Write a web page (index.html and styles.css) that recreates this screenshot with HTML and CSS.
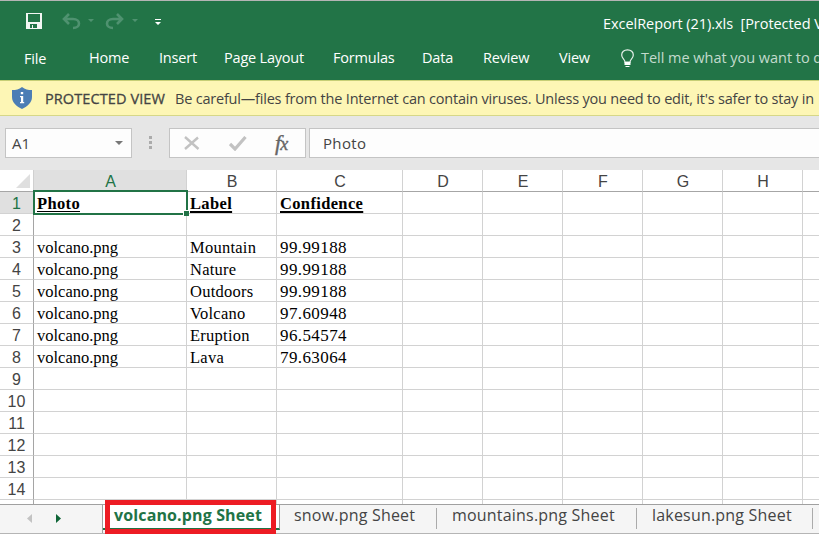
FILE: index.html
```html
<!DOCTYPE html>
<html lang="en">
<head>
<meta charset="utf-8">
<title>ExcelReport (21).xls</title>
<link rel="stylesheet" href="styles.css">
</head>
<body>
<div class="window">
  <header class="ribbon">
    <div class="titlebar">
      <svg class="quick" width="150" height="30" viewBox="0 0 150 30">
        <path fill="#f2f6f3" fill-rule="evenodd" d="M0 0H16V16H0ZM2 1V9H14V1ZM4 11V15H6V12H7V15H11V11Z" transform="translate(26 6)"/>
        <g fill="none" stroke="#4f9270" stroke-width="2.6">
          <path d="M69 7L64 12L69 17M64 12H73C81 12 81 21 73 21"/>
          <path d="M117 7L122 12L117 17M122 12H113C105 12 105 21 113 21"/>
        </g>
        <path fill="#4f9270" d="M88 12h6l-3 3zM132 12h6l-3 3z"/>
      </svg>
      <svg class="customize" width="6" height="7" viewBox="0 0 6 7"><path fill="#fff" d="M0 0H6V1H0ZM0 3H6L3 6Z"/></svg>
      <span class="filename">ExcelReport (21).xls&nbsp; [Protected View]</span>
    </div>
    <nav class="menu">
      <span class="file">File</span>
      <span class="home">Home</span>
      <span class="insert">Insert</span>
      <span class="layout">Page Layout</span>
      <span class="formulas">Formulas</span>
      <span class="data">Data</span>
      <span class="review">Review</span>
      <span class="view">View</span>
      <svg class="bulb" width="13" height="19" viewBox="0 0 13 19"><path fill="none" stroke="#e8f1ec" stroke-width="1.2" d="M4 13.2C4 10 .7 9.500 .7 6C.7 3 3 .8 6.500 .8S12.300 3 12.300 6C12.300 9.500 9 10 9 13.200Z"/><path fill="#fff" d="M3.500 13H9.500V16H3.500ZM4.500 17H8.500V18H4.500Z"/></svg>
      <span class="tell">Tell me what you want to do</span>
    </nav>
  </header>
  <section class="notice">
    <svg width="20" height="22" viewBox="0 0 20 22"><path fill="#4b7db5" d="M10 0C7 2.500 4 3 0 3V10C0 16 5 19.500 10 22C15 19.500 20 16 20 10V3C16 3 13 2.500 10 0Z"/><path fill="#fff" d="M8.800 5H11.200V7.300H8.800ZM8 9H11.200V15H12.200V16.200H8V15H9V10.200H8Z"/></svg>
    <span class="protected">PROTECTED VIEW</span>
    <span class="careful">Be careful—files from the Internet can contain viruses. Unless you need to edit, it's safer to stay in</span>
  </section>
  <section class="formula-row">
    <div class="box name-box"><span>A1</span><svg width="8" height="4" viewBox="0 0 8 4"><path fill="#777" d="M0 0H8L4 4Z"/></svg></div>
    <svg class="dots" width="3" height="13" viewBox="0 0 3 13"><path fill="#ababab" d="M0 0H3V3H0ZM0 5H3V8H0ZM0 10H3V13H0Z"/></svg>
    <div class="box controls">
      <svg width="16" height="14" viewBox="0 0 16 14"><path fill="none" stroke="#c2c2c2" stroke-width="2.4" d="M1 1L14.500 13M14 1.500L1 13"/></svg>
      <svg width="18" height="15" viewBox="0 0 18 15"><path fill="none" stroke="#c2c2c2" stroke-width="3.2" d="M1 8L6 13L16.500 1"/></svg>
      <span class="fx"><i>f</i><i class="x">x</i></span>
    </div>
    <div class="box formula">Photo</div>
  </section>
  <main class="sheet">
    <div class="row heads">
      <b class="corner"><svg width="14" height="14" viewBox="0 0 14 14"><path fill="#dfdfdf" d="M14 0V14H0Z"/></svg></b>
      <span class="active">A</span><span>B</span><span>C</span><span>D</span><span>E</span><span>F</span><span>G</span><span>H</span><span></span>
    </div>
    <div class="row titles"><b class="active">1</b><span class="selected"><u>Photo</u></span><span><u>Label</u></span><span><u>Confidence</u></span><span></span><span></span><span></span><span></span><span></span><span></span></div>
    <div class="row"><b>2</b><span></span><span></span><span></span><span></span><span></span><span></span><span></span><span></span><span></span></div>
    <div class="row"><b>3</b><span>volcano.png</span><span>Mountain</span><span>99.99188</span><span></span><span></span><span></span><span></span><span></span><span></span></div>
    <div class="row"><b>4</b><span>volcano.png</span><span>Nature</span><span>99.99188</span><span></span><span></span><span></span><span></span><span></span><span></span></div>
    <div class="row"><b>5</b><span>volcano.png</span><span>Outdoors</span><span>99.99188</span><span></span><span></span><span></span><span></span><span></span><span></span></div>
    <div class="row"><b>6</b><span>volcano.png</span><span>Volcano</span><span>97.60948</span><span></span><span></span><span></span><span></span><span></span><span></span></div>
    <div class="row"><b>7</b><span>volcano.png</span><span>Eruption</span><span>96.54574</span><span></span><span></span><span></span><span></span><span></span><span></span></div>
    <div class="row"><b>8</b><span>volcano.png</span><span>Lava</span><span>79.63064</span><span></span><span></span><span></span><span></span><span></span><span></span></div>
    <div class="row"><b>9</b><span></span><span></span><span></span><span></span><span></span><span></span><span></span><span></span><span></span></div>
    <div class="row"><b>10</b><span></span><span></span><span></span><span></span><span></span><span></span><span></span><span></span><span></span></div>
    <div class="row"><b>11</b><span></span><span></span><span></span><span></span><span></span><span></span><span></span><span></span><span></span></div>
    <div class="row"><b>12</b><span></span><span></span><span></span><span></span><span></span><span></span><span></span><span></span><span></span></div>
    <div class="row"><b>13</b><span></span><span></span><span></span><span></span><span></span><span></span><span></span><span></span><span></span></div>
    <div class="row"><b>14</b><span></span><span></span><span></span><span></span><span></span><span></span><span></span><span></span><span></span></div>
    <div class="row"><b></b><span></span><span></span><span></span><span></span><span></span><span></span><span></span><span></span><span></span></div>
  </main>
  <footer class="tabs">
    <div class="nav">
      <svg width="5" height="9" viewBox="0 0 5 9"><path fill="#c3c3c3" d="M5 0V9L0 4.500Z"/></svg>
      <svg width="5" height="9" viewBox="0 0 5 9"><path fill="#0f6537" d="M0 0V9L5 4.500Z"/></svg>
    </div>
    <div class="current"><span>volcano.png Sheet</span></div>
    <span class="tab snow">snow.png Sheet</span>
    <span class="tab mountains">mountains.png Sheet</span>
    <span class="tab lakesun">lakesun.png Sheet</span>
  </footer>
</div>
</body>
</html>
```

FILE: styles.css
```css
*, *::before, *::after { box-sizing: border-box; }
body { margin: 0; font-family: "Open Sans", "Noto Sans", sans-serif; color: #444; }
svg { display: block; flex: none; }
.window { width: 819px; height: 534px; overflow: hidden; display: flex; flex-direction: column; background: #fff; }
.window > * { flex: none; }

.ribbon { height: 80px; background: #227447; border-top: 1px solid #b5b5b5; color: #fff; font-size: 14.5px; white-space: nowrap; }
.titlebar { height: 40px; display: flex; align-items: flex-start; padding-top: 6px; }
.customize { margin: 12px 0 0 5px; }
.filename { margin: 7px 0 0 442px; line-height: 20px; letter-spacing: -0.05px; }
.menu { display: flex; height: 34px; align-items: center; line-height: 20px; }
.menu span { flex: none; letter-spacing: -0.2px; }
.menu .file { width: 89px; padding-left: 24px; position: relative; top: 1px; }
.home { width: 70px; }
.insert { width: 65px; }
.layout { width: 109px; }
.formulas { width: 89px; }
.data { width: 61px; }
.review { width: 76px; }
.view { width: 62px; }
.bulb { margin-right: 7px; }
.menu .tell { color: #c3dbcd; letter-spacing: -0.03px; }

.notice { height: 36px; background: #fdf6b5; border-top: 1px solid #c6ce76; border-bottom: 1px solid #d6d788; display: flex; align-items: center; padding-left: 12px; font-size: 14.5px; white-space: nowrap; overflow: hidden; }
.protected { width: 130px; margin-left: 13px; flex: none; letter-spacing: 0.1px; -webkit-text-stroke: 0.3px #444; }
.careful { letter-spacing: -0.2px; }

.formula-row { height: 54px; padding: 12px 0 0 5px; background: #e6e6e6; display: flex; }
.box { height: 30px; flex: none; border: 1px solid #c4c4c4; background: #fdfdfd; display: flex; align-items: center; font-size: 15px; }
.name-box { width: 127px; padding: 0 8px 0 6px; justify-content: space-between; }
.dots { margin: 8px 17px 0 17px; }
.controls { width: 137px; margin-right: 3px; padding-left: 14px; }
.controls svg + svg { margin-left: 29px; }
.fx { margin-left: 28px; font: 22px/26px "Liberation Serif", serif; color: #666; -webkit-text-stroke: 0.4px #666; display: flex; }
.fx .x { font-size: 18px; margin-left: -1px; padding-top: 1px; }
.box.formula { flex: 1; border-right: 0; padding-left: 13px; letter-spacing: 0.35px; }

.sheet { height: 334px; overflow: hidden; }
.row { display: grid; grid-template-columns: 34px 153px 90px 126px repeat(6, 80px); width: 883px; height: 22px; font: 16px/24px "Liberation Serif", serif; color: #000; }
.row > * { border-right: 1px solid #d2d2d2; border-bottom: 1px solid #d2d2d2; padding-left: 3px; white-space: nowrap; height: 22px; min-width: 0; }
.row > b { font: 16px/23px "Liberation Sans", sans-serif; color: #444; border-right-color: #a5a5a5; text-align: center; padding: 0; }
.row > :nth-child(2) { font-size: 16.5px; }
.row > :nth-child(3) { font-size: 16.5px; letter-spacing: 0.25px; }
.row > :nth-child(4) { font-size: 17px; letter-spacing: 0.4px; }
.titles { font-weight: bold; }
.titles > :nth-child(n+2) { font-size: 16.5px; letter-spacing: 0.35px; }
.titles u { text-underline-offset: 2px; text-decoration-thickness: 2px; text-decoration-skip-ink: none; }
.heads > span:nth-child(n+2) { font: 16px/23px "Liberation Sans", sans-serif; letter-spacing: 0; color: #444; text-align: center; padding: 0 0 0 1px; border-bottom-color: #a6a6a6; }
.heads > .corner { display: flex; align-items: flex-end; padding: 0 0 3px 16px; border-right-color: #d0d0d0; border-bottom-color: #a6a6a6; }
.row > .active, .heads > span.active:nth-child(2) { background: #e0e0e0; color: #217346; }
.selected { position: relative; }
.selected u { text-decoration-thickness: 1px; }
.selected::before { content: ""; position: absolute; inset: -2px -2px -2px -1px; border: 2px solid #217346; }
.selected::after { content: ""; position: absolute; right: -3px; bottom: -3px; width: 6px; height: 6px; background: #217346; border: solid #fff; border-width: 1px 0 0 1px; }

.tabs { height: 30px; border-top: 1px solid #a0a0a0; border-bottom: 1px solid #b5b5b5; background: #f5f5f5; display: flex; line-height: 21px; font-size: 16px; white-space: nowrap; }
.nav { width: 103px; display: flex; padding: 9px 0 0 27px; gap: 24px; border-right: 1px solid #a0a0a0; }
.current { width: 177px; height: 25px; position: relative; background: #fff; border-bottom: 2px solid #217346; border-right: 1px solid #a0a0a0; color: #217346; font-weight: bold; padding-left: 11px; letter-spacing: 0.13px; }
.current::after { content: ""; position: absolute; left: 2px; top: -5px; width: 171px; height: 34px; border: 5px solid #ed1c24; }
.tab { height: 21px; margin-top: 3px; line-height: 15px; flex: none; border-right: 1px solid #ababab; letter-spacing: 0.2px; }
.snow { width: 157px; padding-left: 14px; }
.mountains { width: 200px; padding-left: 15px; }
.lakesun { width: 176px; padding-left: 15px; }
```
